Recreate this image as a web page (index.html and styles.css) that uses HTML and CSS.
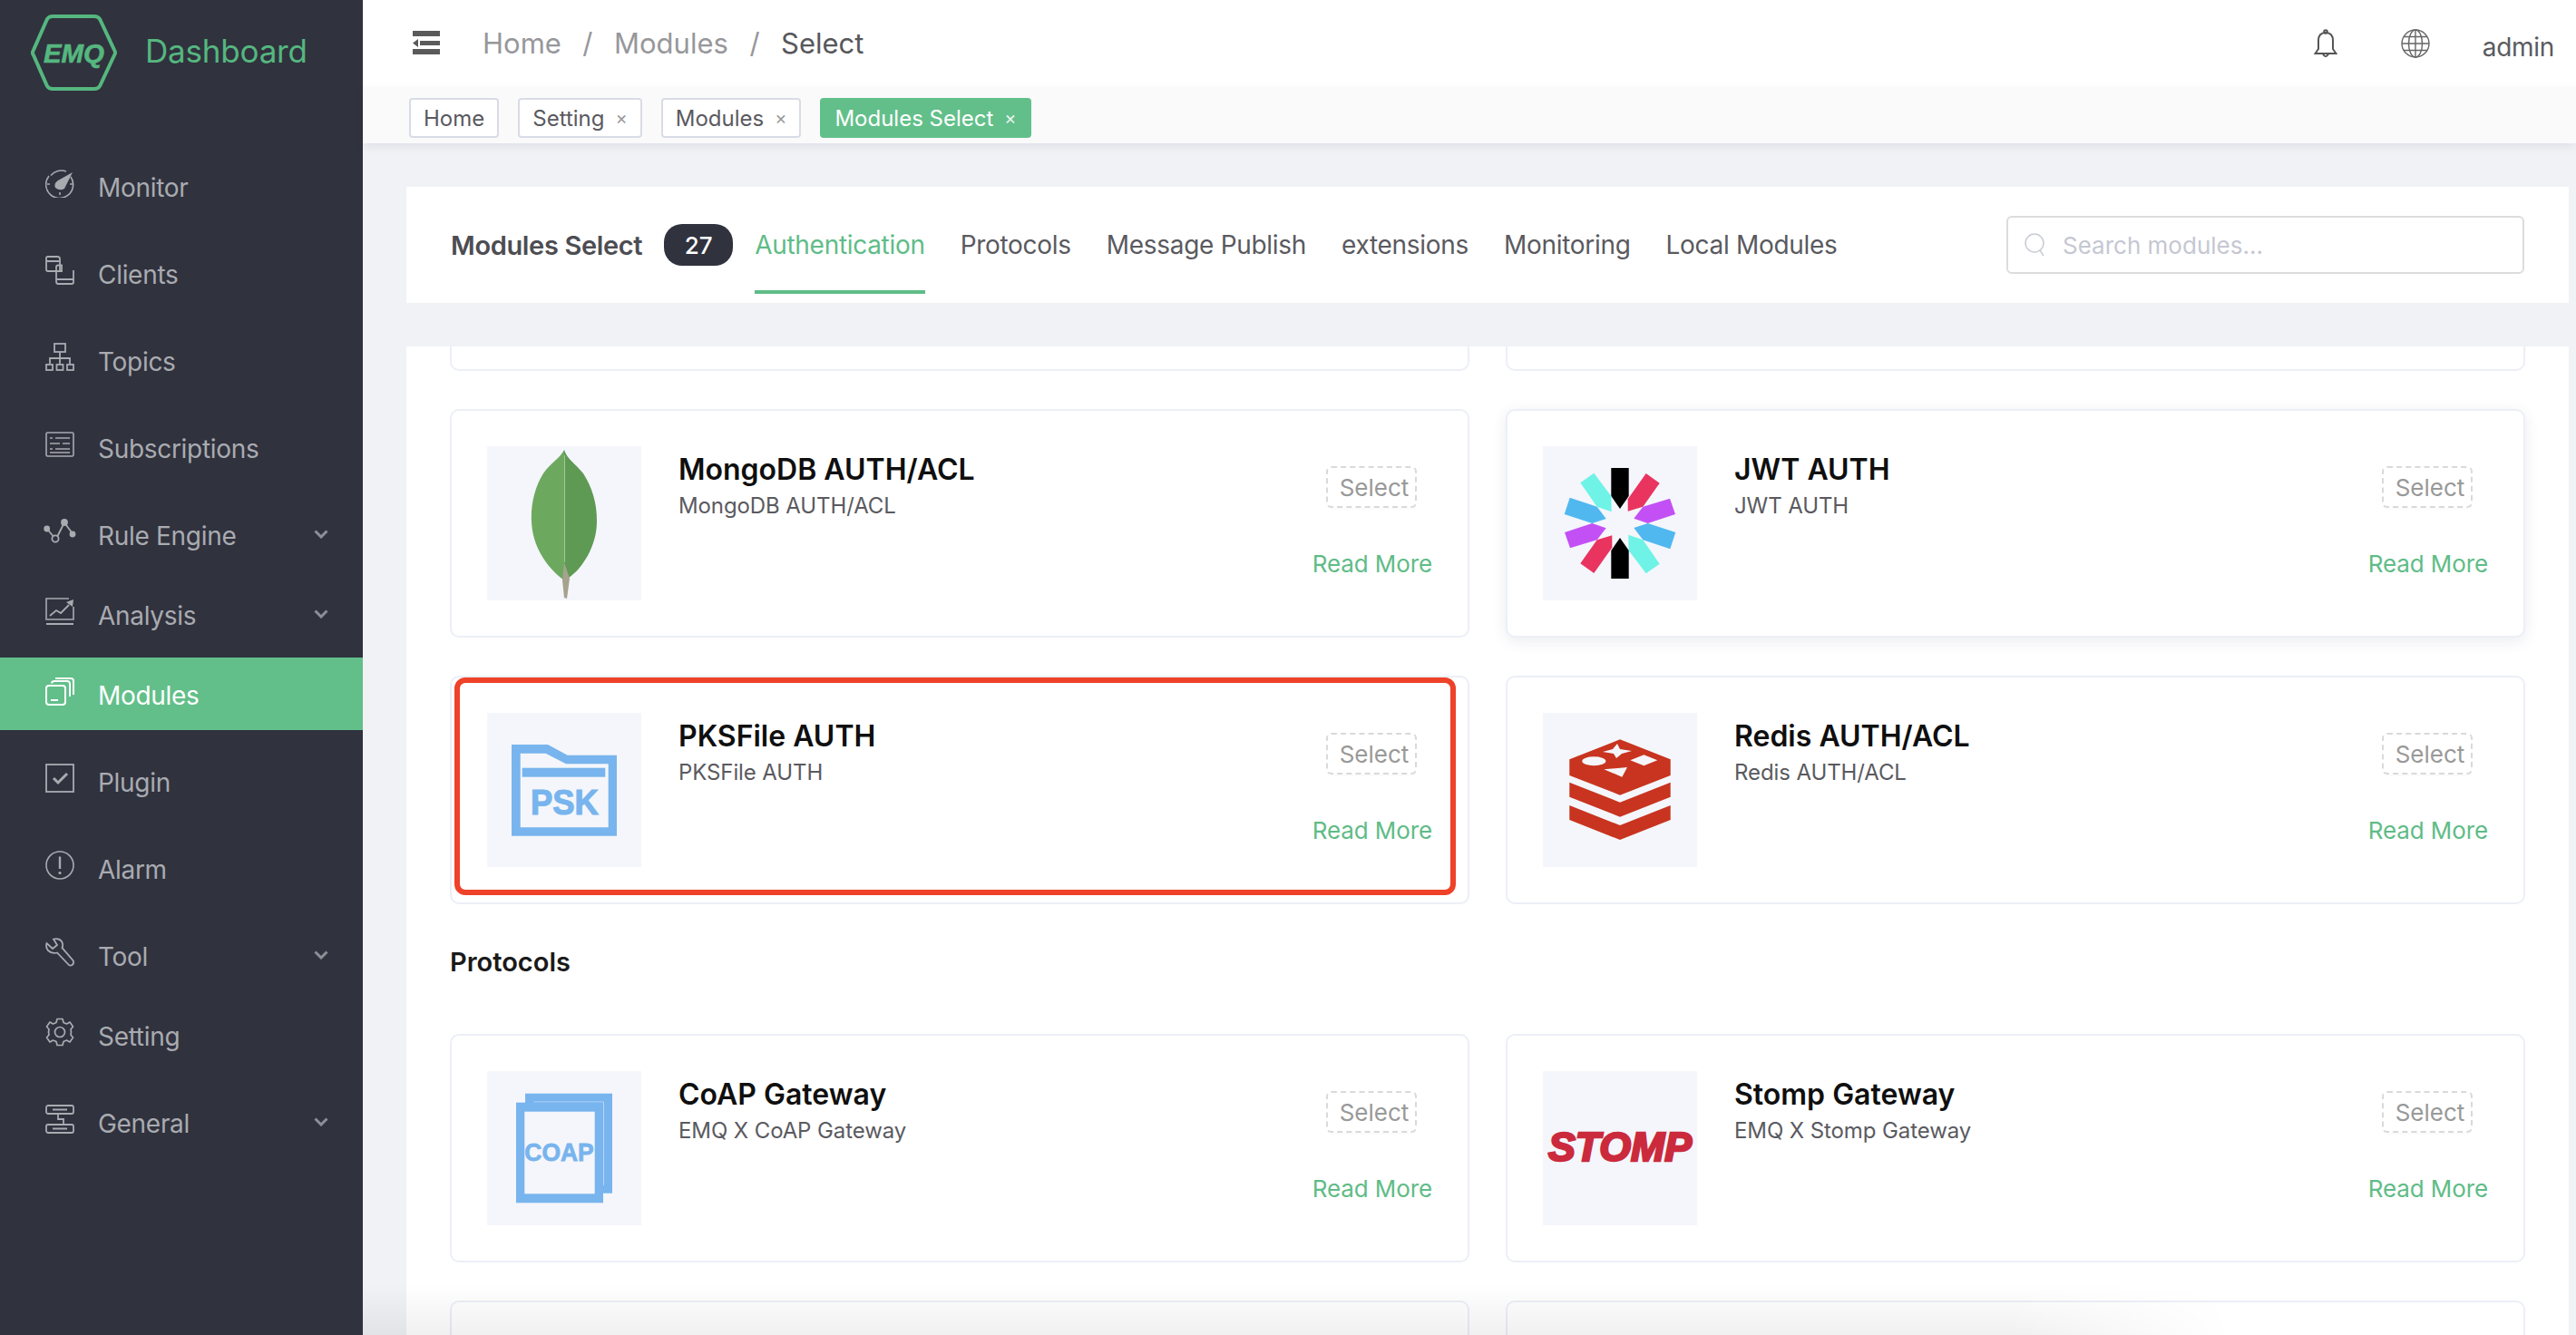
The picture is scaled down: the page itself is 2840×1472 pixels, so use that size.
FILE: index.html
```html
<!DOCTYPE html>
<html lang="en">
<head>
    <meta charset="UTF-8">
    <title>Modules Select</title>
    <link rel="stylesheet" href="styles.css">
</head>
<body>
<div class="app">
    <aside class="sidebar">
        <div class="brand">
            <svg class="brand-logo" viewBox="0 0 96 86">
                <path d="M24 3H70Q74 3 76 6L92 40Q94 43 92 46L76 80Q74 83 70 83H24Q20 83 18 80L3 46Q1 43 3 40L18 6Q20 3 24 3Z" fill="none" stroke="#55b77f" stroke-width="4"/>
                <text x="14" y="54" textLength="67" lengthAdjust="spacingAndGlyphs" class="brand-mark">EMQ</text>
            </svg>
            <span class="brand-name">Dashboard</span>
        </div>
        <nav class="menu">
            <a class="menu-item">
                <svg class="menu-icon" viewBox="0 0 32 32"><path d="M6 7.500A15 15 0 0 1 23 3M28 9A15 15 0 1 1 4 8" fill="none" stroke="currentColor" stroke-width="1.6"/><path d="M30 4L21 22Q16 25 11 21Q9 16 14 13Z" fill="currentColor"/><path d="M16 29V26M2 17H5M27 17H30" stroke="currentColor" stroke-width="1.6"/></svg>
                <span>Monitor</span>
            </a>
            <a class="menu-item">
                <svg class="menu-icon" viewBox="0 0 32 32"><path d="M16 17V3.500Q16 1 13.500 1H2.500Q1 1 1 2.500V15Q1 17 3 17H18V10.500H14Q12 10.500 12 12.500V28Q12 31 14 31H29Q31 31 31 29V16" fill="none" stroke="currentColor" stroke-width="1.8"/><path d="M1 6H16M12 26H31" stroke="currentColor" stroke-width="1.8"/></svg>
                <span>Clients</span>
            </a>
            <a class="menu-item">
                <svg class="menu-icon" viewBox="0 0 32 32" fill="none" stroke="currentColor" stroke-width="1.8"><rect x="10" y="1" width="12" height="9"/><path d="M16 10V17M5 23V17H27V23M16 17V23"/><rect x="1" y="24" width="7" height="6"/><rect x="12.500" y="24" width="7" height="6"/><rect x="24" y="24" width="7" height="6"/></svg>
                <span>Topics</span>
            </a>
            <a class="menu-item">
                <svg class="menu-icon" viewBox="0 0 32 32" fill="none" stroke="currentColor" stroke-width="1.6"><rect x="1" y="3" width="30" height="26" rx="1.500"/><path d="M5 9H8M11 9H27M5 15H16M19 15H27M5 21H8M11 21H27M5 25H27" stroke-width="1.4"/></svg>
                <span>Subscriptions</span>
            </a>
            <a class="menu-item has-sub">
                <svg class="menu-icon icon-wide" viewBox="0 0 36 32" fill="none" stroke="currentColor" stroke-width="1.8"><path d="M3.700 13L10.500 21M15.500 21L21.500 9M25 9L31 17"/><circle cx="3.700" cy="13" r="2.500" fill="currentColor"/><circle cx="13" cy="24" r="3.600"/><circle cx="23" cy="6" r="3" fill="currentColor"/><circle cx="32" cy="19" r="2.500" fill="currentColor"/></svg>
                <span>Rule Engine</span>
                <svg class="chevron" viewBox="0 0 16 10"><path d="M1.500 1.500L8 8L14.500 1.500" fill="none" stroke="currentColor" stroke-width="3"/></svg>
            </a>
            <a class="menu-item has-sub">
                <svg class="menu-icon" viewBox="0 0 32 32" fill="none" stroke="currentColor" stroke-width="1.6"><path d="M31 11V25H1V2H26"/><path d="M1 30H31" stroke-width="2"/><path d="M5 21L12 15L17 18L26 9" stroke-width="1.800"/><path d="M31 3L30 11L23 6Z" fill="currentColor" stroke="none"/></svg>
                <span>Analysis</span>
                <svg class="chevron" viewBox="0 0 16 10"><path d="M1.500 1.500L8 8L14.500 1.500" fill="none" stroke="currentColor" stroke-width="3"/></svg>
            </a>
            <a class="menu-item active">
                <svg class="menu-icon" viewBox="0 0 32 32" fill="none" stroke="currentColor" stroke-width="2"><rect x="1" y="10" width="21" height="21" rx="3"/><path d="M7 7.500Q7 5 10 5H24Q27 5 27 8V22"/><path d="M11 2H28Q31 2 31 5V20"/><path d="M6 26H14"/></svg>
                <span>Modules</span>
            </a>
            <a class="menu-item">
                <svg class="menu-icon" viewBox="0 0 32 32" fill="none" stroke="currentColor" stroke-width="1.800"><rect x="1" y="1" width="30" height="30"/><path d="M9 16L14 21L24 11" stroke-width="3"/></svg>
                <span>Plugin</span>
            </a>
            <a class="menu-item">
                <svg class="menu-icon" viewBox="0 0 32 32" fill="none" stroke="currentColor" stroke-width="1.600"><circle cx="16" cy="16" r="15"/><path d="M16 6.500V20" stroke-width="2.400"/><circle cx="16" cy="24.500" r="1.600" fill="currentColor" stroke="none"/></svg>
                <span>Alarm</span>
            </a>
            <a class="menu-item has-sub">
                <svg class="menu-icon" viewBox="0 0 32 32" fill="none" stroke="currentColor" stroke-width="1.800"><path d="M9 1.500Q15 0 18 4Q20 8 18.500 11L30.500 25Q32 28 29.500 30Q27 31.500 25 29L13 16.500Q7 18 3 14Q0 10 1.500 6L8 12L13 8Z"/></svg>
                <span>Tool</span>
                <svg class="chevron" viewBox="0 0 16 10"><path d="M1.500 1.500L8 8L14.500 1.500" fill="none" stroke="currentColor" stroke-width="3"/></svg>
            </a>
            <a class="menu-item">
                <svg class="menu-icon" viewBox="0 0 32 32" fill="none" stroke="currentColor" stroke-width="1.700"><circle cx="16" cy="16" r="5.500"/><path d="M13 1.500H19L20 5.500L23.500 7L27 5L30.500 10L28 13L28.500 16L28 19L30.500 22L27 27L23.500 25L20 26.500L19 30.500H13L12 26.500L8.500 25L5 27L1.500 22L4 19L3.500 16L4 13L1.500 10L5 5L8.500 7L12 5.500Z" stroke-linejoin="round"/></svg>
                <span>Setting</span>
            </a>
            <a class="menu-item">
                <svg class="menu-icon" viewBox="0 0 32 32" fill="none" stroke="currentColor" stroke-width="1.800"><rect x="1" y="1" width="30" height="9" rx="2"/><rect x="1" y="22" width="30" height="9" rx="2"/><path d="M8 5.500H24M8 26.500H24M14 10V16H20V22"/></svg>
                <span>General</span>
                <svg class="chevron" viewBox="0 0 16 10"><path d="M1.500 1.500L8 8L14.500 1.500" fill="none" stroke="currentColor" stroke-width="3"/></svg>
            </a>
        </nav>
    </aside>

    <div class="main">
        <header class="topbar">
            <svg class="fold-icon" viewBox="0 0 30 26"><path d="M0 0H30V6H0ZM8 11H30V16H8ZM0 20H30V26H0ZM0 13.500L6 9V18Z" fill="#5a5a5a"/></svg>
            <div class="crumbs">
                <span>Home</span><i>/</i><span>Modules</span><i>/</i><span class="crumb-now">Select</span>
            </div>
            <div class="top-right">
                <svg class="bell-icon" viewBox="0 0 26 32" fill="none" stroke="#555" stroke-width="2"><path d="M13 4Q5 4 5 13V22L1.500 27H24.500L21 22V13Q21 4 13 4Z"/><circle cx="13" cy="3" r="1.800"/><path d="M10 27.500Q13 33 16 27.500"/></svg>
                <svg class="globe-icon" viewBox="0 0 32 32" fill="none" stroke="#666" stroke-width="1.400"><circle cx="16" cy="16" r="15"/><ellipse cx="16" cy="16" rx="7.500" ry="15"/><path d="M16 1V31M3 8.500H29M1 16H31M3 23.500H29"/></svg>
                <span class="user-name">admin</span>
            </div>
        </header>
        <div class="tagbar">
            <span class="tag">Home</span>
            <span class="tag">Setting<b>×</b></span>
            <span class="tag">Modules<b>×</b></span>
            <span class="tag tag-active">Modules Select<b>×</b></span>
        </div>

        <div class="content">
            <div class="page-head">
                <h2>Modules Select</h2>
                <span class="count">27</span>
                <div class="tabs">
                    <a class="tab tab-active">Authentication</a>
                    <a class="tab">Protocols</a>
                    <a class="tab">Message Publish</a>
                    <a class="tab">extensions</a>
                    <a class="tab">Monitoring</a>
                    <a class="tab">Local Modules</a>
                </div>
                <label class="search">
                    <svg class="search-icon" viewBox="0 0 24 26" fill="none" stroke="#c9ccd4" stroke-width="1.500"><circle cx="11" cy="11" r="10"/><path d="M17 19L21 25"/></svg>
                    <input type="text" placeholder="Search modules...">
                </label>
            </div>

            <div class="list">
                <div class="grid">
                    <div class="card card-cut"></div>
                    <div class="card card-cut"></div>

                    <div class="card">
                        <svg class="thumb" viewBox="0 0 170 170">
                            <path d="M85 4C80 14 70 18 62 30C52 46 48 66 49 83C50 110 65 133 85 148Z" fill="#6da85f"/>
                            <path d="M85 4C88 14 98 20 106 30C116 46 121 62 121 83C121 110 105 135 90 145L85 148Z" fill="#5e9a54"/>
                            <path d="M85.500 10V128" stroke="#a3c795" stroke-width="1"/>
                            <path d="M85 128L91 146L88 168L85 167L83 148L84 138Z" fill="#a6a28d"/>
                        </svg>
                        <div class="card-body">
                            <h3>MongoDB AUTH/ACL</h3>
                            <p>MongoDB AUTH/ACL</p>
                        </div>
                        <div class="card-actions">
                            <button class="select-btn">Select</button>
                            <a class="read-more">Read More</a>
                        </div>
                    </div>

                    <div class="card card-hover">
                        <svg class="thumb" viewBox="0 0 170 170">
                            <defs>
                                <g id="jwt-half">
                                    <path d="M75.300 24H94.700V55L85 69L75.300 55Z" fill="#000"/>
                                    <path d="M113.700 30L128.700 40.700L110.300 66.700L93.700 71.700V58.300Z" fill="#ea3460"/>
                                    <path d="M140 57.700L146 75L115.700 85L100.300 79.700L110.300 66.700Z" fill="#c350f5"/>
                                    <path d="M146.300 95L140.300 113.300L110.300 103.300L100.300 90L115.700 85Z" fill="#50b8ef"/>
                                    <path d="M128.700 129.700L113.700 140.300L94.700 115L94.300 97.700L110.300 103.300Z" fill="#6ef3e6"/>
                                </g>
                            </defs>
                            <use href="#jwt-half"/>
                            <use href="#jwt-half" transform="rotate(180 85 85)"/>
                        </svg>
                        <div class="card-body">
                            <h3>JWT AUTH</h3>
                            <p>JWT AUTH</p>
                        </div>
                        <div class="card-actions">
                            <button class="select-btn">Select</button>
                            <a class="read-more">Read More</a>
                        </div>
                    </div>

                    <div class="card">
                        <svg class="thumb" viewBox="0 0 170 170">
                            <path d="M27 35H67L88.700 46.700H143V135.700H27ZM36.700 44.700V126.300H133.700V56.300H87L64.700 44.700Z" fill="#78b4ed" fill-rule="evenodd"/>
                            <rect x="38.700" y="60.700" width="91.600" height="10" fill="#78b4ed"/>
                            <text x="48" y="112.300" textLength="74.700" lengthAdjust="spacingAndGlyphs" class="logo-text logo-psk">PSK</text>
                        </svg>
                        <div class="card-body">
                            <h3>PKSFile AUTH</h3>
                            <p>PKSFile AUTH</p>
                        </div>
                        <div class="card-actions">
                            <button class="select-btn">Select</button>
                            <a class="read-more">Read More</a>
                        </div>
                        <div class="callout"></div>
                    </div>

                    <div class="card">
                        <svg class="thumb" viewBox="0 0 170 170">
                            <path d="M29.300 51.300L85 29.300L140.700 51.300V69L85 90.700L29.300 69Z" fill="#c8341f"/>
                            <path d="M29.300 76.700L85 98.700L140.700 76.700V92.700L85 114.700L29.300 92.700Z" fill="#c8341f"/>
                            <path d="M29.300 102L85 124L140.700 102V118L85 140L29.300 118Z" fill="#c8341f"/>
                            <ellipse cx="56.300" cy="53.300" rx="13" ry="5" fill="#f4f6fb"/>
                            <path d="M96.300 52.300L111.300 46.300L126.300 52.300L111.300 58.300Z" fill="#f4f6fb"/>
                            <path d="M67.300 62.300L93 60L87.300 70.700Z" fill="#f4f6fb"/>
                            <path d="M82 34L85 40L98 42L87 45L81 50L78 45L66 43L77 40Z" fill="#f4f6fb"/>
                        </svg>
                        <div class="card-body">
                            <h3>Redis AUTH/ACL</h3>
                            <p>Redis AUTH/ACL</p>
                        </div>
                        <div class="card-actions">
                            <button class="select-btn">Select</button>
                            <a class="read-more">Read More</a>
                        </div>
                    </div>
                </div>

                <h4 class="list-title">Protocols</h4>

                <div class="grid">
                    <div class="card">
                        <svg class="thumb" viewBox="0 0 170 170">
                            <rect x="42" y="24.700" width="96" height="110" fill="#78b4ed"/>
                            <path d="M51.500 34H128.500V126" fill="none" stroke="#b9d7f5" stroke-width="1"/>
                            <rect x="32" y="34.700" width="96" height="110.600" fill="#78b4ed"/>
                            <rect x="41.300" y="44.700" width="77.400" height="90.600" fill="#f4f6fb"/>
                            <text x="41.300" y="99" textLength="76.400" lengthAdjust="spacingAndGlyphs" class="logo-text logo-coap">COAP</text>
                        </svg>
                        <div class="card-body">
                            <h3>CoAP Gateway</h3>
                            <p>EMQ X CoAP Gateway</p>
                        </div>
                        <div class="card-actions">
                            <button class="select-btn">Select</button>
                            <a class="read-more">Read More</a>
                        </div>
                    </div>

                    <div class="card">
                        <svg class="thumb" viewBox="0 0 170 170">
                            <text x="6" y="99" textLength="158" lengthAdjust="spacingAndGlyphs" class="logo-text logo-stomp">STOMP</text>
                        </svg>
                        <div class="card-body">
                            <h3>Stomp Gateway</h3>
                            <p>EMQ X Stomp Gateway</p>
                        </div>
                        <div class="card-actions">
                            <button class="select-btn">Select</button>
                            <a class="read-more">Read More</a>
                        </div>
                    </div>

                    <div class="card"></div>
                    <div class="card"></div>
                </div>
            </div>
        </div>
        <div class="bottom-fade"></div>
    </div>
</div>
</body>
</html>
```

FILE: styles.css
```css
* {
    box-sizing: border-box;
}

body {
    margin: 0;
    background: #f0f2f6;
    font-family: Inter, "Noto Sans", sans-serif;
    color: #5a5a5f;
}

.app {
    display: flex;
    height: 1472px;
    overflow: hidden;
}

/* sidebar */
.sidebar {
    width: 400px;
    flex-shrink: 0;
    background: #30323e;
    color: #a9abb0;
}

.brand {
    display: flex;
    align-items: center;
    height: 165px;
    padding: 15px 0 64px 34px;
}

.brand-logo {
    width: 96px;
    height: 86px;
}

.brand-mark {
    font-family: "Liberation Sans", sans-serif;
    font-size: 29px;
    font-weight: 700;
    font-style: italic;
    fill: #55b77f;
    stroke: #55b77f;
    stroke-width: 0.6px;
}

.brand-name {
    margin: -4px 0 0 30px;
    font-size: 35px;
    letter-spacing: -0.2px;
    color: #55b77f;
}

.menu-item {
    display: flex;
    align-items: center;
    height: 80px;
    margin-bottom: 16px;
    padding-left: 50px;
    font-size: 28px;
    letter-spacing: -0.3px;
}

.menu-item span {
    padding-top: 3px;
}

.menu-item.has-sub {
    margin-bottom: 8px;
}

.menu-item.active {
    background: #62bf8a;
    color: #fff;
    margin-top: 1px;
}

.menu-icon {
    width: 32px;
    height: 32px;
    margin-right: 26px;
    margin-bottom: 6px;
    flex-shrink: 0;
}

.icon-wide {
    width: 36px;
    margin-left: -2px;
    margin-right: 24px;
}

.chevron {
    width: 16px;
    height: 10px;
    margin-left: auto;
    margin-right: 38px;
    color: #8d8f96;
}

/* top */
.main {
    position: relative;
    flex: 1;
    min-width: 0;
}

.topbar {
    display: flex;
    align-items: center;
    height: 96px;
    padding-left: 55px;
    background: #fff;
}

.fold-icon {
    width: 30px;
    height: 26px;
    margin-top: -2px;
}

.crumbs {
    display: flex;
    align-items: center;
    margin-left: 47px;
    margin-top: -2px;
    font-size: 31px;
    color: #97979b;
}

.crumbs i {
    margin: 0 23.5px;
    font-style: normal;
}

.crumb-now {
    color: #57575b;
}

.top-right {
    display: flex;
    align-items: center;
    margin-left: auto;
    padding-right: 24px;
}

.bell-icon {
    width: 26px;
    height: 32px;
}

.globe-icon {
    width: 32px;
    height: 32px;
    margin-left: 70px;
}

.user-name {
    margin: 8px 0 0 58px;
    font-size: 28px;
    letter-spacing: -0.3px;
    color: #5a5a5f;
}

.tagbar {
    display: flex;
    align-items: center;
    gap: 21px;
    height: 62px;
    padding: 6px 0 0 51px;
    background: #fafafa;
    box-shadow: 0 4px 10px rgba(0, 21, 41, 0.07);
    position: relative;
}

.tag {
    display: flex;
    align-items: center;
    height: 44px;
    padding: 0 14px;
    border: 2px solid #d8dce5;
    border-radius: 4px;
    background: #fff;
    font-size: 24px;
    color: #5a5a5f;
}

.tag b {
    margin-left: 12px;
    font-size: 20px;
    font-weight: 400;
    color: #9a9a9a;
}

.tag-active {
    border-color: #62bf8a;
    background: #62bf8a;
    color: #fff;
}

.tag-active b {
    color: #e6f5ec;
}

/* page head */
.content {
    padding: 48px 8px 0 48px;
}

.page-head {
    display: flex;
    align-items: center;
    height: 128px;
    padding: 0 49px;
    background: #fff;
}

.page-head h2 {
    margin: 0;
    font-size: 29px;
    font-weight: 600;
    letter-spacing: -0.35px;
    color: #4d4d52;
}

.count {
    display: flex;
    align-items: center;
    justify-content: center;
    width: 76px;
    height: 46px;
    margin-left: 24px;
    border-radius: 20px;
    background: #30323e;
    color: #fff;
    font-size: 26px;
    font-weight: 500;
}

.tabs {
    display: flex;
    gap: 39px;
    height: 128px;
    margin-left: 24px;
}

.tab {
    display: flex;
    align-items: center;
    height: 118px;
    padding-top: 14px;
    border-bottom: 4px solid transparent;
    font-size: 28px;
    letter-spacing: -0.3px;
    color: #5a5a5f;
}

.tab-active {
    color: #5fbc87;
    border-bottom-color: #5fbc87;
}

.search {
    display: flex;
    align-items: center;
    width: 571px;
    height: 64px;
    margin-left: auto;
    padding-left: 18px;
    border: 2px solid #dcdcdc;
    border-radius: 6px;
}

.search-icon {
    width: 24px;
    height: 26px;
}

.search input {
    flex: 1;
    min-width: 0;
    margin-left: 16px;
    padding-top: 2px;
    border: none;
    outline: none;
    font-family: inherit;
    font-size: 26px;
    color: #5a5a5f;
}

.search input::placeholder {
    color: #c5c7d2;
}

/* module list */
.list {
    height: 1200px;
    margin-top: 48px;
    padding: 0 48px;
    background: #fff;
    overflow: hidden;
}

.grid {
    display: grid;
    grid-template-columns: repeat(2, 1fr);
    gap: 42px 40px;
}

.card {
    position: relative;
    display: flex;
    height: 252px;
    padding: 39px;
    border: 2px solid #eceff6;
    border-radius: 10px;
    background: #fff;
}

.card-cut {
    height: 27px;
    padding: 0;
    border-top: none;
    border-radius: 0 0 10px 10px;
}

.card-hover {
    box-shadow: 0 4px 16px rgba(60, 70, 110, 0.1);
}

.thumb {
    width: 170px;
    height: 170px;
    flex-shrink: 0;
    background: #f4f6fb;
}

.logo-text {
    font-family: "Liberation Sans", sans-serif;
    font-weight: 700;
    fill: #78b4ed;
    stroke: #78b4ed;
}

.logo-psk {
    font-size: 39px;
    stroke-width: 1.2px;
}

.logo-coap {
    font-size: 28px;
    stroke-width: 0.8px;
}

.logo-stomp {
    font-size: 44px;
    font-style: italic;
    fill: #cb2a3d;
    stroke: #cb2a3d;
    stroke-width: 2.5px;
}

.card-body {
    flex: 1;
    margin-left: 41px;
    padding-top: 6px;
}

.card-body h3 {
    margin: 0;
    font-size: 32px;
    line-height: 40px;
    font-weight: 600;
    color: #0f0f0f;
}

.card-body p {
    margin: 2px 0 0;
    font-size: 24px;
    line-height: 36px;
    letter-spacing: -0.1px;
    color: #5a5a5f;
}

.card-actions {
    display: flex;
    flex-direction: column;
    align-items: flex-end;
    padding-top: 22px;
}

.select-btn {
    width: 100px;
    height: 46px;
    margin-right: 17px;
    padding: 0 0 0 6px;
    border: 2px dashed #d9d9d9;
    border-radius: 6px;
    background: #fff;
    box-shadow: 0 2px 0 rgba(0, 0, 0, 0.015);
    font-family: inherit;
    font-size: 26px;
    color: #999;
}

.read-more {
    margin-top: 44px;
    font-size: 26px;
    line-height: 36px;
    letter-spacing: -0.1px;
    color: #5fbc87;
}

.list-title {
    margin: 0;
    padding: 44px 0 59px;
    font-size: 29px;
    line-height: 40px;
    font-weight: 600;
    color: #1a1a1a;
}

/* annotation drawn over the card */
.callout {
    position: absolute;
    top: 0;
    left: 3px;
    right: 13px;
    bottom: 8px;
    border: 6px solid #ee4229;
    border-radius: 12px;
}

.bottom-fade {
    position: absolute;
    left: 0;
    bottom: 0;
    width: 2060px;
    height: 56px;
    background: linear-gradient(to top, rgba(0, 0, 0, 0.06), transparent);
    -webkit-mask-image: linear-gradient(to right, #000 88%, transparent);
    mask-image: linear-gradient(to right, #000 88%, transparent);
}
```
